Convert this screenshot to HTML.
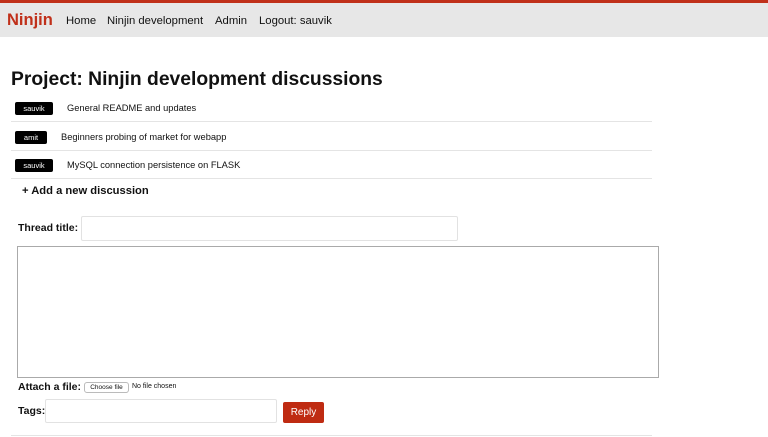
<!DOCTYPE html>
<html><head><style>
*{box-sizing:border-box}
body{margin:0;width:768px;height:437px;overflow:hidden;background:#fff;font-family:"Liberation Sans",sans-serif;color:#111}
.nav{position:absolute;left:0;top:0;width:768px;height:37px;background:#e7e7e7;border-top:3px solid #c0301a}
.nav span{position:absolute;top:12px;font-size:11.3px}
.brand{left:7px;top:8px!important;font-size:16.5px!important;font-weight:bold;color:#c0301a}
h1{position:absolute;left:11px;top:69px;margin:0;font-size:19.3px;font-weight:bold}
.row{position:absolute;left:11px;width:641px;height:29px;border-bottom:1px solid #e4e4e4;font-size:9.3px}
.badge{position:absolute;left:4px;top:9px;height:13px;background:#000;color:#fff;border-radius:2px;font-size:7.5px;line-height:13px;text-align:center}
.row .t{position:absolute;top:10px}
.abs{position:absolute}
.lbl{font-size:10.5px;font-weight:bold}
.inp{border:1px solid #e2e2e2;border-radius:2px;background:#fff}
</style></head><body>
<div class="nav">
<span class="brand">Ninjin</span>
<span style="left:66px">Home</span>
<span style="left:107px">Ninjin development</span>
<span style="left:215px">Admin</span>
<span style="left:259px">Logout: sauvik</span>
</div>
<h1>Project: Ninjin development discussions</h1>
<div class="row" style="top:93px"><div class="badge" style="width:38px">sauvik</div><div class="t" style="left:56px">General README and updates</div></div>
<div class="row" style="top:122px"><div class="badge" style="width:32px">amit</div><div class="t" style="left:50px">Beginners probing of market for webapp</div></div>
<div class="row" style="top:150px"><div class="badge" style="width:38px">sauvik</div><div class="t" style="left:56px">MySQL connection persistence on FLASK</div></div>
<div class="abs" style="left:22px;top:185px;font-size:11.2px;font-weight:bold">+ Add a new discussion</div>
<div class="abs lbl" style="left:18px;top:222px">Thread title:</div>
<div class="abs inp" style="left:81px;top:216px;width:377px;height:25px"></div>
<div class="abs" style="left:17px;top:246px;width:642px;height:132px;border:1px solid #aaa"></div>
<div class="abs lbl" style="left:18px;top:381px">Attach a file:</div>
<div class="abs" style="left:84px;top:382px;width:45px;height:11px;border:1px solid #bbb;border-radius:3px;font-size:6.5px;line-height:9px;text-align:center">Choose file</div>
<div class="abs" style="left:132px;top:383px;font-size:7px">No file chosen</div>
<div class="abs lbl" style="left:18px;top:405px">Tags:</div>
<div class="abs inp" style="left:45px;top:399px;width:232px;height:24px"></div>
<div class="abs" style="left:283px;top:402px;width:41px;height:21px;background:#bf2b12;color:#fff;font-size:10px;line-height:21px;text-align:center;border-radius:2px">Reply</div>
<div class="abs" style="left:11px;top:435px;width:641px;border-top:1px solid #e4e4e4"></div>
</body></html>
